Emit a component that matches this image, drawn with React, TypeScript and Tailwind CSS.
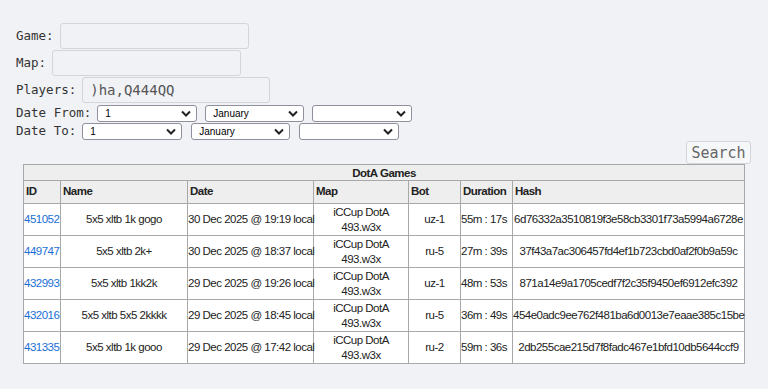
const games = [
  { id: "451052", name: "5x5 xltb 1k gogo", date: "30 Dec 2025 @ 19:19 local", bot: "uz-1", dur: "55m : 17s", hash: "6d76332a3510819f3e58cb3301f73a5994a6728e" },
  { id: "449747", name: "5x5 xltb 2k+", date: "30 Dec 2025 @ 18:37 local", bot: "ru-5", dur: "27m : 39s", hash: "37f43a7ac306457fd4ef1b723cbd0af2f0b9a59c" },
  { id: "432993", name: "5x5 xltb 1kk2k", date: "29 Dec 2025 @ 19:26 local", bot: "uz-1", dur: "48m : 53s", hash: "871a14e9a1705cedf7f2c35f9450ef6912efc392" },
  { id: "432016", name: "5x5 xltb 5x5 2kkkk", date: "29 Dec 2025 @ 18:45 local", bot: "ru-5", dur: "36m : 49s", hash: "454e0adc9ee762f481ba6d0013e7eaae385c15be" },
  { id: "431335", name: "5x5 xltb 1k gooo", date: "29 Dec 2025 @ 17:42 local", bot: "ru-2", dur: "59m : 36s", hash: "2db255cae215d7f8fadc467e1bfd10db5644ccf9" },
];

const mono = "font-['DejaVu_Sans_Mono',monospace]";

function Select({ value, w }: { value: string; w: string }) {
  return (
    <div
      className={`${w} h-[17px] flex items-center justify-between bg-white border border-[#8f8f9d] rounded-[3px] pl-[7px] pr-[5px] text-[10px] text-black font-['Liberation_Sans',sans-serif]`}
    >
      <span>{value}</span>
      <svg width="10" height="7" viewBox="0 0 10 7">
        <path d="M1 1.5 L5 5.5 L9 1.5" fill="none" stroke="#222" strokeWidth="2" />
      </svg>
    </div>
  );
}

function TextBox({ w, value }: { w: string; value?: string }) {
  return (
    <div
      className={`${w} h-[26px] flex items-center border border-[#d4d5d9] rounded-[3px] bg-[#f1f2f5] px-[7px] text-[14px] text-[#555] ${mono}`}
    >
      {value}
    </div>
  );
}

export default function App() {
  return (
    <div className="min-h-[389px] w-[768px] bg-[#f1f2f5] overflow-hidden">
      <div className={`pt-[23px] pl-[16px] text-[12.5px] text-[#333] ${mono}`}>
        <div className="flex items-center gap-[6px]">
          <span>Game:</span>
          <TextBox w="w-[189px]" />
        </div>
        <div className="flex items-center gap-[6px] mt-px">
          <span>Map:</span>
          <TextBox w="w-[189px]" />
        </div>
        <div className="flex items-center gap-[6px] mt-px">
          <span>Players:</span>
          <TextBox w="w-[188px]" value=")ha,Q444QQ" />
        </div>
        <div className="flex items-center gap-[8px] mt-[2px] h-[17px]">
          <span className="mr-[-2px]">Date From:</span>
          <Select value="1" w="w-[100px]" />
          <Select value="January" w="w-[99px]" />
          <Select value="" w="w-[100px]" />
        </div>
        <div className="flex items-center gap-[9px] mt-[1px] h-[17px]">
          <span className="mr-[-3px]">Date To:</span>
          <Select value="1" w="w-[100px]" />
          <Select value="January" w="w-[99px]" />
          <Select value="" w="w-[100px]" />
        </div>
      </div>

      <div className="flex justify-end pr-[17px] mt-[1px]">
        <button
          className={`h-[23px] w-[65px] border border-[#d4d5d9] rounded-[3px] bg-[#f6f7f9] text-[15px] text-[#666] ${mono}`}
        >
          Search
        </button>
      </div>

      <table className="ml-[23px] w-[722px] table-fixed border-collapse border border-[#9a9a9a] bg-white text-[11.5px] tracking-[-0.5px] text-[#222] font-['Liberation_Sans',Arial,sans-serif]">
        <colgroup>
          <col className="w-[37px]" />
          <col className="w-[127px]" />
          <col className="w-[126px]" />
          <col className="w-[95px]" />
          <col className="w-[52px]" />
          <col className="w-[52px]" />
          <col />
        </colgroup>
        <thead>
          <tr className="bg-[#eeeeee] h-[16px]">
            <th colSpan={7} className="border border-[#a8a8a8] py-0 text-center font-bold leading-[14px]">
              DotA Games
            </th>
          </tr>
          <tr className="bg-[#eeeeee] text-left h-[23px]">
            {["ID", "Name", "Date", "Map", "Bot", "Duration", "Hash"].map((h) => (
              <th key={h} className="border border-[#a8a8a8] px-[2px] py-0 font-bold">
                {h}
              </th>
            ))}
          </tr>
        </thead>
        <tbody>
          {games.map((g) => (
            <tr key={g.id} className="h-[32px]">
              <td className="border border-[#a8a8a8] px-0 py-0 text-[#1a6fd6]">{g.id}</td>
              <td className="border border-[#a8a8a8] py-0 text-center">{g.name}</td>
              <td className="border border-[#a8a8a8] px-0 py-0 whitespace-nowrap">{g.date}</td>
              <td className="border border-[#a8a8a8] py-0 text-center leading-[15px]">
                iCCup DotA
                <br />
                493.w3x
              </td>
              <td className="border border-[#a8a8a8] py-0 text-center">{g.bot}</td>
              <td className="border border-[#a8a8a8] px-0 py-0 whitespace-nowrap">{g.dur}</td>
              <td className="border border-[#a8a8a8] py-0 text-center whitespace-nowrap">{g.hash}</td>
            </tr>
          ))}
        </tbody>
      </table>
    </div>
  );
}
